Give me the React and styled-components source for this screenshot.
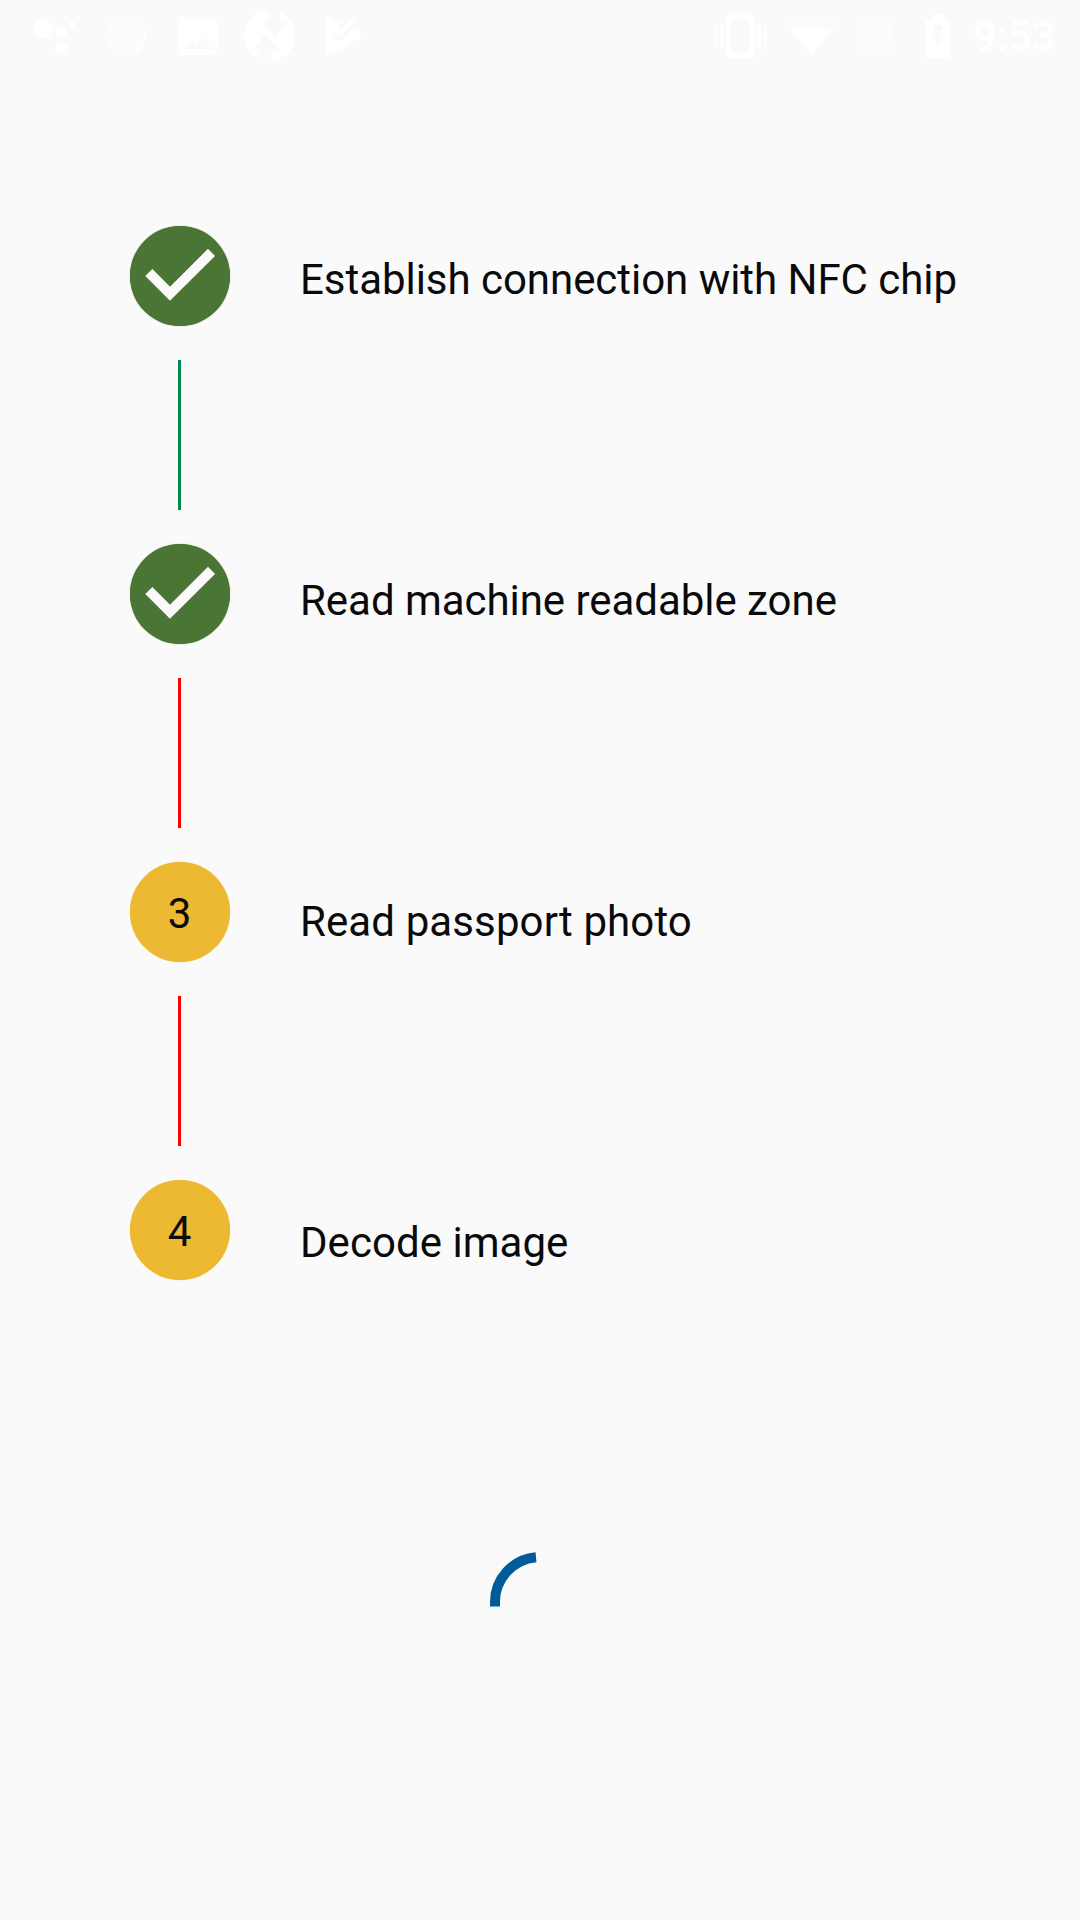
import React from 'react';
import styled, { createGlobalStyle } from 'styled-components';

const GlobalStyle = createGlobalStyle`
  * { box-sizing: border-box; }
  html, body { margin: 0; background: #fafafa; }
`;

const Screen = styled.div`
  width: 1080px;
  height: 1920px;
  display: flex;
  flex-direction: column;
  overflow: hidden;
  background: #fafafa;
  color: #0a0a0a;
  font: 400 42px/50px Roboto, "Noto Sans", sans-serif;
`;

const StatusBar = styled.header`
  height: 72px;
  display: flex;
  justify-content: space-between;
  padding: 0 25px 0 18px;
  color: #fff;
`;

const StatusGroup = styled.div`
  display: flex;
`;

const StatusIcon = styled.svg`
  display: block;
  width: ${(p) => p.$width}px;
  height: 72px;
  flex: none;
`;

const Clock = styled.time`
  width: 82px;
  padding-top: 12px;
  font-weight: 500;
  white-space: nowrap;
`;

const Steps = styled.main`
  display: flex;
  padding: 120px 0 0 96px;
`;

const Track = styled.div`
  width: 168px;
  display: flex;
  flex-direction: column;
  align-items: center;
`;

const Stage = styled.div`
  height: 168px;
  display: flex;
  align-items: center;
`;

const Badge = styled.div`
  width: 100px;
  height: 100px;
  border-radius: 50%;
  display: flex;
  align-items: center;
  justify-content: center;
  background: ${(p) => (p.$done ? '#4a7534' : '#edb932')};
  box-shadow: 0 0 1px ${(p) => (p.$done ? '#4a7534' : '#edb932')};
`;

const CheckMark = styled.svg`
  width: 100px;
  height: 100px;
`;

const StepNumber = styled.span`
  padding-top: 4px;
  padding-right: 1px;
`;

const Connector = styled.div`
  width: 3px;
  height: 150px;
  margin-right: 1px;
  background: ${(p) => (p.$done ? '#008a4f' : '#ff0000')};
`;

const Labels = styled.div`
  display: flex;
  flex-direction: column;
  padding: 63px 0 0 36px;
`;

const Label = styled.div`
  height: 321px;
  letter-spacing: ${(p) => p.$tracking}px;
  white-space: nowrap;

  &:last-child {
    height: 320px;
  }
`;

const Loading = styled.div`
  display: flex;
  justify-content: center;
`;

const Spinner = styled.svg`
  width: 144px;
  height: 144px;
  display: block;
`;

const steps = [
  { label: 'Establish connection with NFC chip', done: true, tracking: -0.04 },
  { label: 'Read machine readable zone', done: true, tracking: -0.04 },
  { label: 'Read passport photo', done: false, tracking: 0.11 },
  { label: 'Decode image', done: false, tracking: 0.04 },
];

const Dots = () => (
  <StatusIcon $width={72} viewBox="18 0 72 72" fill="#fff">
    <circle cx="42.5" cy="28.5" r="9.8" />
    <circle cx="61.5" cy="33" r="5.8" />
    <circle cx="61.5" cy="49" r="6.6" />
    <circle cx="72" cy="24.3" r="3.3" />
  </StatusIcon>
);

const Sphere = () => (
  <StatusIcon $width={72} viewBox="90 0 72 72" fill="#fff">
    <circle cx="125.5" cy="35.5" r="20.5" opacity="0.35" />
    <path d="M144 28a20.5 20.5 0 0 1-25 27c15 2 27-9 25-27Z" />
  </StatusIcon>
);

const Photo = () => (
  <StatusIcon $width={72} viewBox="162 0 72 72" fill="#fff">
    <path
      fillRule="evenodd"
      d="M183 17h30q4 0 4 4v30q0 4-4 4h-30q-4 0-4-4V21q0-4 4-4Zm1 32h28l-9-12-7 9-5-6Z"
    />
  </StatusIcon>
);

const Transfer = () => (
  <StatusIcon $width={72} viewBox="234 0 72 72" fill="#fff">
    <circle cx="269.5" cy="35.2" r="25.6" />
    <path
      d="M268.500 8v14.300h-6.200L275 37.700l11.700-15.400H280V8ZM259.300 63V50h-6.600L265 33.500 278.300 50H271v13Z"
      fill="#fafafa"
    />
  </StatusIcon>
);

const PlayCheck = () => (
  <StatusIcon $width={72} viewBox="306 0 72 72">
    <path
      d="M325 20q0-4 4-3l12.500 7-5 5 3.500 3.500L352 29l7 3 1.500 1q2 2 0 4L331 54.500q-6 2-6-2Z"
      fill="#fff"
    />
    <path d="m333 33 6.500 6.500L352.500 26.500" fill="none" stroke="#fafafa" strokeWidth="4" />
    <path d="m336 29.500 4 4 14-14" fill="none" stroke="#fff" strokeWidth="4" />
  </StatusIcon>
);

const Vibrate = () => (
  <StatusIcon $width={72} viewBox="705 0 72 72" fill="#fff">
    <path
      fillRule="evenodd"
      d="M730 15h21q4 0 4 4v35q0 4-4 4h-21q-4 0-4-4V19q0-4 4-4Zm1 4.500v33h18v-33Z"
    />
    <path d="M715 28h2.800v17H715ZM720.500 22.500h3v28h-3ZM758 22.500h3v28h-3ZM763.800 28h2.800v17h-2.800Z" />
  </StatusIcon>
);

const Wifi = () => (
  <StatusIcon $width={72} viewBox="777 0 72 72" fill="#fff">
    <path d="M811.500 55.500 786 24q25.500-19 51 0Z" opacity="0.3" />
    <path d="M811.500 55.500 792.500 31q19-11.500 38 0Z" />
  </StatusIcon>
);

const NoSim = () => (
  <StatusIcon $width={66} viewBox="849 0 66 72">
    <path d="M869 22q4-5 8-5h11q3 0 3 3v27ZM862 23l28 32h-25q-3 0-3-3Z" fill="#fff" opacity="0.4" />
    <path d="m858 20 35 36" stroke="#fff" strokeWidth="2.500" opacity="0.4" />
  </StatusIcon>
);

const Battery = () => (
  <StatusIcon $width={58} viewBox="915 0 58 72" fill="#fff">
    <path
      fillRule="evenodd"
      d="M932 14h11v5h5q2 0 2 2v35q0 2-2 2h-21q-2 0-2-2V21q0-2 2-2h5Zm2 11.500-1.500 14h4L933.500 53l11-17h-5l4-10.500Z"
    />
  </StatusIcon>
);

export default function App() {
  return (
    <>
      <GlobalStyle />
      <Screen>
        <StatusBar>
          <StatusGroup>
            <Dots />
            <Sphere />
            <Photo />
            <Transfer />
            <PlayCheck />
          </StatusGroup>
          <StatusGroup>
            <Vibrate />
            <Wifi />
            <NoSim />
            <Battery />
            <Clock>9:53</Clock>
          </StatusGroup>
        </StatusBar>

        <Steps>
          <Track>
            {steps.map((step, index) => (
              <React.Fragment key={step.label}>
                <Stage>
                  <Badge $done={step.done}>
                    {step.done ? (
                      <CheckMark viewBox="0 0 100 100" fill="none" stroke="#fafafa" strokeWidth="10">
                        <path d="M18.800 46.500 40 67.700 81.500 26.400" />
                      </CheckMark>
                    ) : (
                      <StepNumber>{index + 1}</StepNumber>
                    )}
                  </Badge>
                </Stage>
                {index < steps.length - 1 && <Connector $done={steps[index + 1].done} />}
              </React.Fragment>
            ))}
          </Track>
          <Labels>
            {steps.map((step) => (
              <Label key={step.label} $tracking={step.tracking}>
                {step.label}
              </Label>
            ))}
          </Labels>
        </Steps>

        <Loading>
          <Spinner viewBox="468 1538 144 144" role="progressbar" aria-label="Loading">
            <path
              d="M495 1606.500V1602A45 45 0 0 1 536 1557.200"
              fill="none"
              stroke="#005b9a"
              strokeWidth="10"
            />
          </Spinner>
        </Loading>
      </Screen>
    </>
  );
}
